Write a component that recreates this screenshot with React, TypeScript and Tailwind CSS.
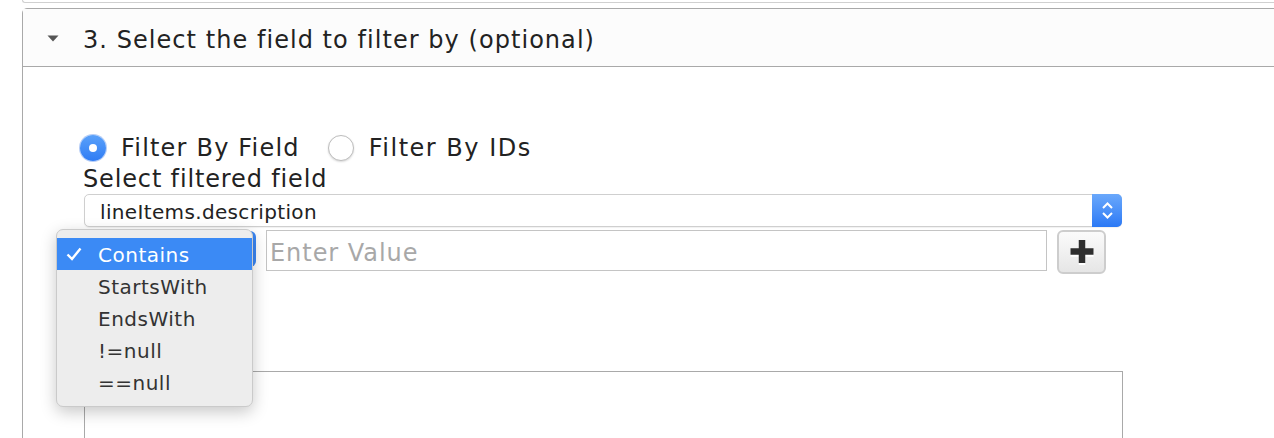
const font = { fontFamily: '"DejaVu Sans", Verdana, sans-serif' };

const options = ["Contains", "StartsWith", "EndsWith", "!=null", "==null"];

function Radio({ checked }: { checked: boolean }) {
  if (checked) {
    return (
      <span className="flex h-[26px] w-[26px] shrink-0 items-center justify-center rounded-full bg-gradient-to-b from-[#5aa1fa] to-[#2f7cf4] shadow-[0_0_0_1px_rgba(40,110,230,0.35)]">
        <span className="h-[8px] w-[8px] rounded-full bg-white" />
      </span>
    );
  }
  return (
    <span className="block h-[26px] w-[26px] shrink-0 rounded-full border border-[#bdbdbd] bg-white shadow-[0_1px_2px_rgba(0,0,0,0.15)]" />
  );
}

export default function App() {
  return (
    <div
      className="relative h-[438px] w-[1274px] overflow-hidden bg-white text-[#222]"
      style={font}
    >
      {/* bottom edge of the previous step */}
      <div className="ml-[22px] h-[3px] w-[1300px] rounded-bl-[5px] border-b border-l border-[#d0d0d0]" />

      {/* step 3 panel */}
      <div className="ml-[22px] mt-[5px] w-[1300px] rounded-t-[5px] border border-[#a9a9a9]">
        <div className="flex h-[58px] items-center border-b border-[#a9a9a9] bg-[#fcfcfc]">
          <svg className="ml-[24px] mr-[24px] mt-[2px]" width="12" height="7" viewBox="0 0 12 7">
            <polygon points="0.5,0.5 11.5,0.5 6,6.5" fill="#555" />
          </svg>
          <span className="pt-[4px] text-[24px] leading-[30px] tracking-[1.05px]">
            3. Select the field to filter by (optional)
          </span>
        </div>

        <div className="pl-[57px] pt-[67px] pb-[20px]">
          {/* filter mode */}
          <div className="flex h-[28px] items-center text-[24px] tracking-[1.2px]">
            <Radio checked />
            <span className="ml-[15px] leading-[28px]">Filter By Field</span>
            <span className="ml-[28px] block">
              <Radio checked={false} />
            </span>
            <span className="ml-[15px] leading-[28px] tracking-[1.5px]">Filter By IDs</span>
          </div>

          <div className="ml-[3px] h-[30px] pt-[2px] text-[24px] leading-[30px] tracking-[0.85px]">
            Select filtered field
          </div>

          {/* field select */}
          <div className="ml-[4px] mt-[2px] flex h-[33px] w-[1038px] items-stretch rounded-[5px] border border-[#cfcfcf] bg-white shadow-[0_1px_1px_rgba(0,0,0,0.06)]">
            <span className="flex-1 pl-[15px] pt-[2px] text-[20px] leading-[31px] tracking-[0.35px]">
              lineItems.description
            </span>
            <span className="-my-px -mr-px flex w-[30px] flex-col items-center justify-center gap-[3px] rounded-r-[5px] bg-gradient-to-b from-[#6aa8fb] to-[#2b79f5]">
              <svg width="11" height="7" viewBox="0 0 11 7">
                <polyline points="1,6 5.5,1.5 10,6" fill="none" stroke="white" strokeWidth="2" />
              </svg>
              <svg width="11" height="7" viewBox="0 0 11 7">
                <polyline points="1,1 5.5,5.5 10,1" fill="none" stroke="white" strokeWidth="2" />
              </svg>
            </span>
          </div>

          {/* operator + value row */}
          <div className="mt-[3px] flex items-start">
            <div className="ml-[4px] mt-[1px] h-[36px] w-[172px] rounded-[6px] bg-[#3a86f4]" />
            <div className="ml-[10px] flex h-[41px] w-[781px] items-center border border-[#c4c4c4] pl-[3px] pt-[4px] text-[24px] tracking-[0.95px] text-[#a8a8a8]">
              Enter Value
            </div>
            <button className="ml-[10px] flex h-[44px] w-[49px] items-center justify-center rounded-[6px] border-2 border-[#cdcdcd] bg-gradient-to-b from-[#fbfbfb] to-[#e6e6e6]">
              <svg width="28" height="28" viewBox="0 0 28 28">
                <path d="M14 3v23M2.5 14.5h23" stroke="#fff" strokeWidth="6.5" transform="translate(0 1)" />
                <path d="M14 2v23M2.5 13.5h23" stroke="#2e2e2e" strokeWidth="6.5" />
              </svg>
            </button>
          </div>

          <div className="ml-[4px] mt-[97px] h-[100px] w-[1039px] border border-[#a9a9a9]" />
        </div>
      </div>

      {/* open operator menu */}
      <div className="absolute left-[56px] top-[229px] w-[197px] rounded-[7px] border border-[#cacaca] bg-[#ededed] py-[8px] shadow-[0_5px_16px_rgba(0,0,0,0.22)]">
        {options.map((o, i) => (
          <div
            key={o}
            className={
              i === 0
                ? "relative flex h-[32px] items-center bg-[#3b8af5] pl-[41px] pt-[2px] text-[20px] tracking-[0.5px] text-white"
                : "flex h-[32px] items-center pl-[41px] pt-[2px] text-[20px] tracking-[0.5px] text-[#333]"
            }
          >
            {i === 0 && (
              <svg className="absolute left-[9px] top-[9px]" width="16" height="14" viewBox="0 0 16 14">
                <polyline points="1.5,7.5 6,12 14.5,1.5" fill="none" stroke="white" strokeWidth="2.4" />
              </svg>
            )}
            {o}
          </div>
        ))}
      </div>
    </div>
  );
}
